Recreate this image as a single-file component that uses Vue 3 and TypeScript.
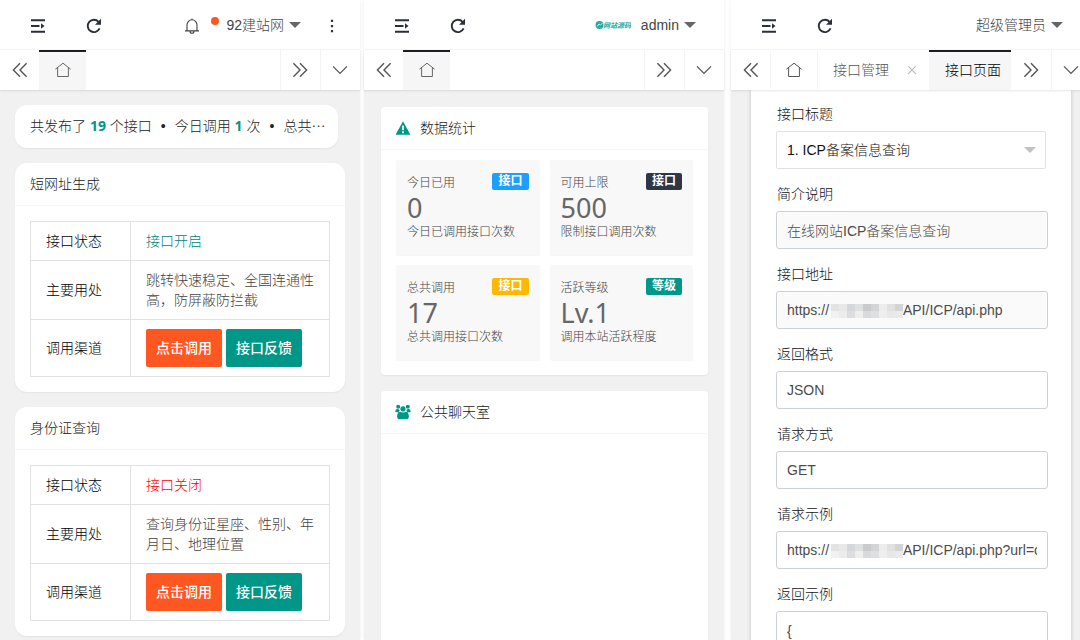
<script setup lang="ts">
import { ref } from 'vue'

interface ApiCard { title: string; open: boolean; usage: string }
interface Stat { label: string; badge: string; tone: string; value: string; note: string }
interface Field { id: string; label: string; value: string; readonly: boolean; masked: boolean }

const apis: ApiCard[] = [
  { title: '短网址生成', open: true, usage: '跳转快速稳定、全国连通性高，防屏蔽防拦截' },
  { title: '身份证查询', open: false, usage: '查询身份证星座、性别、年月日、地理位置' },
]

const stats: Stat[] = [
  { label: '今日已用', badge: '接口', tone: 'blue', value: '0', note: '今日已调用接口次数' },
  { label: '可用上限', badge: '接口', tone: 'dark', value: '500', note: '限制接口调用次数' },
  { label: '总共调用', badge: '接口', tone: 'amber', value: '17', note: '总共调用接口次数' },
  { label: '活跃等级', badge: '等级', tone: 'teal', value: 'Lv.1', note: '调用本站活跃程度' },
]

const hiddenHost = '\u00a0'.repeat(18)
const fields = ref<Field[]>([
  { id: 'intro', label: '简介说明', value: '在线网站ICP备案信息查询', readonly: true, masked: false },
  { id: 'url', label: '接口地址', value: `https://${hiddenHost}/API/ICP/api.php`, readonly: true, masked: true },
  { id: 'format', label: '返回格式', value: 'JSON', readonly: false, masked: false },
  { id: 'method', label: '请求方式', value: 'GET', readonly: false, masked: false },
  { id: 'request', label: '请求示例', value: `https://${hiddenHost}/API/ICP/api.php?url=c`, readonly: false, masked: true },
])

const maskTones = [
  ['#e2e3e5', '#e8e8e9', '#d6d7da', '#dfe1e1', '#c9cacc', '#d3d4d6', '#ededed', '#dfe0e2', '#d3d5d5'],
  ['#f1f1f1', '#ececec', '#dcdddf', '#eeeeee', '#d9dadc', '#dedfe1', '#eeeeef', '#e8e8e8', '#eaeaeb'],
]
const response = ref('{')
</script>

<template>
  <div class="screens">
    <svg class="sprite" aria-hidden="true">
      <symbol id="i-menu" viewBox="0 0 16 16"><path d="M1 2.2h14M1 8h8.500M1 13.8h14" stroke="currentColor" stroke-width="1.9" fill="none" /><path d="M11 5.2v5.6L14.5 8z" fill="currentColor" /></symbol>
      <symbol id="i-refresh" viewBox="0 0 16 16"><path d="M13.6 10.4A6.2 6.2 0 1 1 12.6 3.8" stroke="currentColor" stroke-width="1.9" fill="none" /><path d="M15 .8v6H9z" fill="currentColor" /></symbol>
      <symbol id="i-bell" viewBox="0 0 16 16"><path d="M1 12.9h14M3 12.6V6.8a5 5 0 0 1 10 0v5.8M8 1.8V.6M6 13.2a2 2 0 0 0 4 0" stroke="currentColor" stroke-width="1.1" fill="none" /></symbol>
      <symbol id="i-more" viewBox="0 0 16 16"><path d="M6.9 1.8h2.2v2.2H6.9zM6.9 7h2.2v2.2H6.9zM6.9 12h2.2v2.2H6.9z" fill="currentColor" /></symbol>
      <symbol id="i-prev" viewBox="0 0 16 16"><path d="M8 1.2 1.4 8 8 14.8M14.6 1.2 8 8l6.6 6.8" stroke="currentColor" stroke-width="1.4" fill="none" /></symbol>
      <symbol id="i-next" viewBox="0 0 16 16"><path d="M8 1.2 14.6 8 8 14.8M1.4 1.2 8 8l-6.6 6.8" stroke="currentColor" stroke-width="1.4" fill="none" /></symbol>
      <symbol id="i-down" viewBox="0 0 16 16"><path d="M1 4.4 8 11.4 15 4.4" stroke="currentColor" stroke-width="1.3" fill="none" /></symbol>
      <symbol id="i-home" viewBox="0 0 16 16"><path d="M.4 7.2 8 1.2l7.6 6M2.6 5.8v8.7h10.8V5.8" stroke="currentColor" stroke-width="1" fill="none" /></symbol>
      <symbol id="i-close" viewBox="0 0 16 16"><path d="m4.200 4.200 7.600 7.600M11.800 4.200l-7.600 7.600" stroke="currentColor" stroke-width="1.200" fill="none" /></symbol>
    </svg>

    <section class="screen">
      <header class="bar">
        <button class="icon" aria-label="菜单"><svg><use href="#i-menu" /></svg></button>
        <button class="icon" aria-label="刷新"><svg><use href="#i-refresh" /></svg></button>
        <span class="grow"></span>
        <button class="bell" aria-label="消息"><svg><use href="#i-bell" /></svg><i class="dot"></i></button>
        <button class="user near">92建站网<i class="caret"></i></button>
        <button class="more" aria-label="更多"><svg><use href="#i-more" /></svg></button>
      </header>
      <nav class="tabs">
        <button class="cell first" aria-label="向左"><svg><use href="#i-prev" /></svg></button>
        <button class="tab home active" aria-label="首页"><svg><use href="#i-home" /></svg></button>
        <span class="grow"></span>
        <button class="cell line" aria-label="向右"><svg><use href="#i-next" /></svg></button>
        <button class="cell line" aria-label="展开"><svg><use href="#i-down" /></svg></button>
      </nav>
      <main class="body">
        <p class="notice">共发布了 <b>19</b> 个接口<i class="sep">•</i>今日调用 <b>1</b> 次<i class="sep">•</i>总共<span class="etc">…</span></p>
        <article v-for="api in apis" :key="api.title" class="card round">
          <h2>{{ api.title }}</h2>
          <div class="inner">
            <table>
              <tbody>
                <tr><th scope="row">接口状态</th><td :class="api.open ? 'on' : 'off'">{{ api.open ? '接口开启' : '接口关闭' }}</td></tr>
                <tr><th scope="row">主要用处</th><td>{{ api.usage }}</td></tr>
                <tr>
                  <th scope="row">调用渠道</th>
                  <td><div class="actions"><button class="btn hot">点击调用</button><button class="btn">接口反馈</button></div></td>
                </tr>
              </tbody>
            </table>
          </div>
        </article>
      </main>
    </section>

    <section class="screen">
      <header class="bar">
        <button class="icon" aria-label="菜单"><svg><use href="#i-menu" /></svg></button>
        <button class="icon" aria-label="刷新"><svg><use href="#i-refresh" /></svg></button>
        <span class="grow"></span>
        <button class="user wide">
          <svg class="logo" viewBox="0 0 36 10">
            <circle cx="4.5" cy="5" r="4" fill="#27aba5" /><path d="M2 6.5 4 4l1.5 1L7.5 3" stroke="#c9efec" fill="none" />
            <text x="8" y="8" font-size="7">网站源码</text>
          </svg>
          admin<i class="caret"></i>
        </button>
      </header>
      <nav class="tabs">
        <button class="cell first" aria-label="向左"><svg><use href="#i-prev" /></svg></button>
        <button class="tab home active" aria-label="首页"><svg><use href="#i-home" /></svg></button>
        <span class="grow"></span>
        <button class="cell line" aria-label="向右"><svg><use href="#i-next" /></svg></button>
        <button class="cell line" aria-label="展开"><svg><use href="#i-down" /></svg></button>
      </nav>
      <main class="body mid">
        <article class="card">
          <h2>
            <svg viewBox="0 0 16 16"><path d="M8 1.2 15.4 14.8H.6z" fill="#009688" /><path d="M8 5.5v4.7M8 11.3v1.9" stroke="#fff" stroke-width="1.7" /></svg>
            数据统计
          </h2>
          <div class="stats">
            <div v-for="s in stats" :key="s.label" class="stat">
              <div class="top"><span>{{ s.label }}</span><span class="badge" :class="s.tone">{{ s.badge }}</span></div>
              <strong>{{ s.value }}</strong>
              <span>{{ s.note }}</span>
            </div>
          </div>
        </article>
        <article class="card tall">
          <h2>
            <svg viewBox="0 0 16 16" fill="#009688">
              <circle cx="3.2" cy="2.8" r="2" /><circle cx="12.8" cy="2.8" r="2" /><circle cx="8" cy="4.9" r="2.6" />
              <path d="M.3 8c0-2 .8-3 2-3 .8 0 1.700.3 2.400 1L3.800 8.400zM15.700 8c0-2-.8-3-2-3-.8 0-1.700.3-2.400 1l.9 2.400zM5.200 7.700c1.700 1 3.900 1 5.600 0 2 .4 3.100 2.300 3.100 4.800 0 1.900-1 2.800-2.500 2.800H4.600c-1.500 0-2.500-.9-2.500-2.800 0-2.500 1.100-4.400 3.100-4.800z" />
            </svg>
            公共聊天室
          </h2>
        </article>
      </main>
    </section>

    <section class="screen">
      <header class="bar">
        <button class="icon" aria-label="菜单"><svg><use href="#i-menu" /></svg></button>
        <button class="icon" aria-label="刷新"><svg><use href="#i-refresh" /></svg></button>
        <span class="grow"></span>
        <button class="user wide">超级管理员<i class="caret"></i></button>
      </header>
      <nav class="tabs">
        <button class="cell first" aria-label="向左"><svg><use href="#i-prev" /></svg></button>
        <button class="tab home line" aria-label="首页"><svg><use href="#i-home" /></svg></button>
        <button class="tab page line">接口管理<svg class="close"><use href="#i-close" /></svg></button>
        <button class="tab page active last">接口页面</button>
        <button class="cell" aria-label="向右"><svg><use href="#i-next" /></svg></button>
        <button class="cell line" aria-label="展开"><svg><use href="#i-down" /></svg></button>
      </nav>
      <main class="body form-body">
        <form class="form" @submit.prevent>
          <div class="field">
            <label for="title">接口标题</label>
            <div class="select"><select id="title"><option>1. ICP备案信息查询</option></select><i class="caret pale"></i></div>
          </div>
          <div v-for="f in fields" :key="f.id" class="field">
            <label :for="f.id">{{ f.label }}</label>
            <div class="box">
              <input :id="f.id" v-model="f.value" type="text" :readonly="f.readonly" />
              <div v-if="f.masked" class="mask">
                <template v-for="(row, r) in maskTones" :key="r"><i v-for="(c, n) in row" :key="n" :style="{ background: c }"></i></template>
              </div>
            </div>
          </div>
          <div class="field">
            <label for="response">返回示例</label>
            <textarea id="response" v-model="response"></textarea>
          </div>
        </form>
      </main>
    </section>
  </div>
</template>

<style>
html, body { margin: 0; overflow: hidden; }
</style>

<style scoped>
.screens {
  display: grid;
  grid-template-columns: 1fr 4px 1fr 7px 1fr;
  width: calc(100% + 11px);
  height: 100vh;
  overflow: hidden;
  background: #fff;
  color: #222;
  font: 300 14px/20px "Liberation Sans", "Noto Sans CJK SC", sans-serif;
}
* { box-sizing: border-box; }
.sprite { position: absolute; width: 0; height: 0; }
.screen { display: flex; flex-direction: column; min-width: 0; min-height: 0; box-shadow: 0 0 3px rgba(0, 0, 0, 0.08); }
.screen:nth-of-type(1) { grid-column: 1; }
.screen:nth-of-type(2) { grid-column: 3; }
.screen:nth-of-type(3) { grid-column: 5; }
button { display: flex; align-items: center; padding: 0; border: 0; background: none; color: inherit; font: inherit; white-space: nowrap; }
svg { display: block; flex: none; width: 16px; height: 16px; }
.grow { flex: 1; }

.bar { display: flex; flex: none; height: 50px; padding: 2px 0 0 10px; border-bottom: 1px solid #f6f6f6; background: #fff; }
.icon { justify-content: center; width: 56px; color: #2b2f3a; }
.bell { gap: 11px; align-items: center; margin-right: 7px; color: #444; }
.dot { width: 8px; height: 8px; margin-bottom: 10px; border-radius: 50%; background: #ff5722; }
.user { gap: 5px; padding-bottom: 2px; color: #444; }
.near { margin-right: 3px; }
.wide { margin-right: 28px; }
.more { justify-content: center; width: 56px; color: #333; }
.caret { width: 0; height: 0; border: 6px solid transparent; border-top-color: #666; border-bottom: 0; }
.logo { width: 36px; height: 10px; margin-right: 5px; fill: #27aba5; font-weight: 700; font-style: italic; }

.tabs { position: relative; display: flex; flex: none; height: 40px; background: #fff; color: #555; box-shadow: 0 1px 2px rgba(0, 0, 0, 0.1); }
.cell { flex: none; justify-content: center; width: 40px; }
.first { width: 39px; }
.tab { flex: none; justify-content: center; border-top: 2px solid transparent; border-bottom: 2px solid transparent; }
.home { width: 47px; }
.line { padding-right: 1px; border-left: 1px solid #f3f3f3; }
.page { justify-content: flex-start; gap: 15px; width: 112px; padding-left: 15px; }
.close { color: #bbb; }
.last { width: 82px; padding-left: 16px; }
.active { border-top-color: #1c1b26; border-bottom-color: #f6f6f6; background: #f6f6f6; color: #000; }
.home.active { color: #666; }

.body { display: flex; flex: 1; flex-direction: column; gap: 15px; min-height: 0; padding: 15px; overflow: hidden; background: #f1f1f1; }
.notice { flex: none; margin: 0 7px 0 0; padding: 11px 11px 12px 15px; overflow: hidden; border-radius: 12px; background: #fff; box-shadow: 0 1px 2px rgba(0, 0, 0, 0.06); white-space: nowrap; }
.notice b { color: #009688; font-family: "Noto Sans", sans-serif; font-weight: 700; }
.sep { margin: 0 9px; font-style: normal; }
.etc { font-family: "Noto Sans CJK SC", sans-serif; line-height: 1; }
.card { flex: none; border-radius: 4px; background: #fff; box-shadow: 0 1px 2px rgba(0, 0, 0, 0.06); }
.round { border-radius: 12px; }
h2 { display: flex; gap: 9px; align-items: center; height: 43px; margin: 0; padding: 0 15px; border-bottom: 1px solid #f6f6f6; font-size: 14px; font-weight: 300; }
.inner { padding: 15px; }
table { width: 100%; border-collapse: collapse; table-layout: fixed; }
th, td { padding: 9px 15px; border: 1px solid #e2e2e2; text-align: left; }
th { width: 100px; color: #000; font-weight: 300; }
td { color: #444; padding-right: 14px; }
.on { color: #008579; }
.off { color: #f00; }
.actions { display: flex; gap: 4px; }
.btn { height: 38px; padding: 0 10px; border-radius: 2px; background: #009688; color: #fff; font-weight: 500; }
.hot { background: #ff5722; }

.mid { padding: 17px 16px 0 17px; gap: 16px; }
.mid h2 { padding: 0 14px; }
.stats { display: grid; grid-template-columns: 1fr 1fr; gap: 10px; padding: 10px 15px 15px; }
.stat { display: flex; flex-direction: column; height: 95px; padding: 13px 11px 0; border-radius: 2px; background: #f8f8f8; box-shadow: 0 1px 1px rgba(0, 0, 0, 0.04); color: #444; font-size: 12px; }
.top { display: flex; justify-content: space-between; }
.badge { height: 17px; padding: 0 6px; border-radius: 2px; color: #fff; font-weight: 700; line-height: 16px; }
.blue { background: #1e9fff; }
.dark { background: #2f3645; }
.amber { background: #ffb800; }
.teal { background: #009688; }
.stat strong { color: #666; font: 400 27px/29px "Noto Sans", sans-serif; }
.tall { flex: 1; border-radius: 4px 4px 0 0; }

.form-body { padding: 0 20px; }
.form { display: flex; flex: none; flex-direction: column; gap: 15px; padding: 14px 23px 0 25px; background: #fff; box-shadow: 0 0 4px rgba(0, 0, 0, 0.2); }
.field { display: flex; flex-direction: column; gap: 7px; color: #111; }
.field label { padding-left: 1px; }
.select { position: relative; margin-right: 2px; }
.select .pale { position: absolute; top: 16px; right: 10px; border-top-color: #c2c2c2; pointer-events: none; }
.box { position: relative; }
select, input, textarea { display: block; width: 100%; height: 38px; margin: 0; padding: 0 10px; border: 1px solid #ccd0d9; border-radius: 3px; outline: 0; background: #fff; color: #4c4c4c; font: inherit; appearance: none; }
select { border-color: #e2e2e2; border-radius: 2px; color: #111; }
input:read-only { background: #fafafa; }
textarea { height: 100px; padding-top: 9px; resize: none; }
.mask { position: absolute; top: 13px; left: 55px; display: grid; grid-template-columns: repeat(9, 8px); grid-auto-rows: 7px; }
</style>
